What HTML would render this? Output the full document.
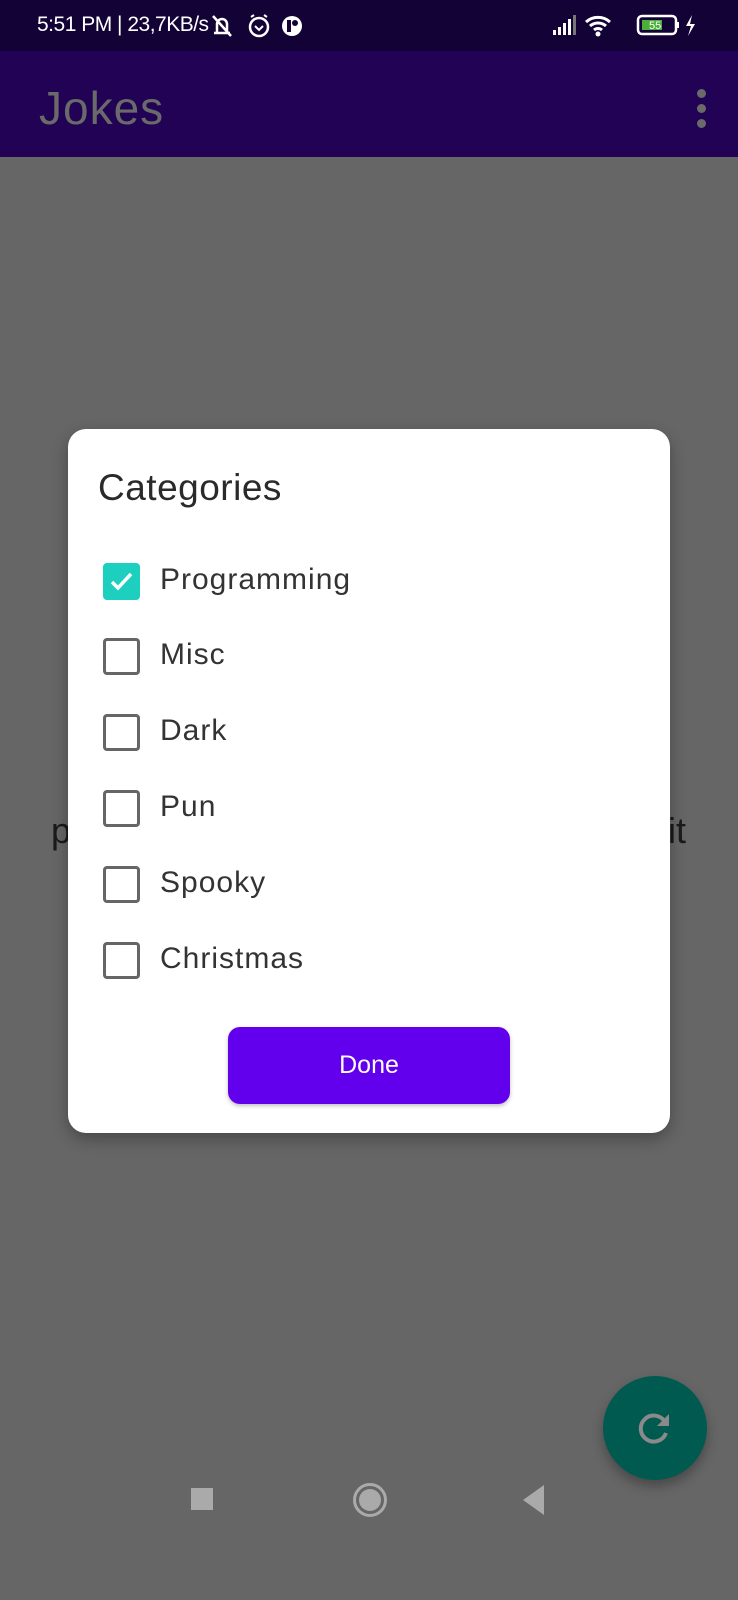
<!DOCTYPE html>
<html><head><meta charset="utf-8"><style>
*{margin:0;padding:0;box-sizing:border-box}
body{width:738px;height:1600px;background:#666;position:relative;overflow:hidden;font-family:"Liberation Sans",sans-serif}
.sb{position:absolute;left:0;top:0;width:738px;height:51px;background:#120236;color:#fff;font-size:21px}
.ab{position:absolute;left:0;top:51px;width:738px;height:106px;background:#220255}
.ab .t{position:absolute;left:39px;top:30px;font-size:46px;color:#6a6a6a;letter-spacing:1px}
.dots{position:absolute;left:697px;top:38px}
.dots i{display:block;width:9px;height:9px;border-radius:50%;background:#6a6a6a;margin-bottom:6px}
.bgt{position:absolute;top:810px;font-size:36px;color:#1a1a1a}
.dlg{position:absolute;left:68px;top:429px;width:602px;height:704px;background:#fff;border-radius:18px;box-shadow:0 6px 16px rgba(0,0,0,.3)}
.ttl{position:absolute;left:30px;top:38px;font-size:37px;color:#2a2a2a;letter-spacing:.5px}
.item{position:absolute;left:35px;height:37px}
.cb{position:absolute;left:0;top:0;width:37px;height:37px;border:3px solid #666;border-radius:4px}
.cb.on{background:#1ccfbf;border-color:#1ccfbf}
.lbl{position:absolute;left:57px;top:0px;font-size:30px;color:#333;white-space:nowrap;letter-spacing:1px}
.btn{position:absolute;left:160px;top:598px;width:282px;height:77px;background:#6200ee;border-radius:12px;color:#fff;font-size:25px;text-align:center;line-height:77px;box-shadow:0 2px 4px rgba(0,0,0,.25)}
.fab{position:absolute;left:603px;top:1376px;width:104px;height:104px;border-radius:50%;background:#005a4f;box-shadow:0 6px 12px rgba(0,0,0,.3)}
</style></head><body>
<div class="sb">
<span style="position:absolute;left:37px;top:13px;letter-spacing:-.5px">5:51 PM | 23,7KB/s</span>
<svg style="position:absolute;left:210px;top:13px" width="95" height="26" viewBox="0 0 95 26">
<path d="M4 20h16M7 20V11a5 5 0 0 1 10 0v9M3 3l18 20" stroke="#fff" stroke-width="2.5" fill="none"/>
<circle cx="49" cy="14" r="9" stroke="#fff" stroke-width="2.5" fill="none"/><path d="M45 13l4 4 4-4M41 4l3-2M57 4l-3-2" stroke="#fff" stroke-width="2" fill="none"/>
<circle cx="82" cy="13" r="10" fill="#fff"/><circle cx="85" cy="10" r="3" fill="#120236"/><rect x="77" y="7" width="4" height="12" fill="#120236"/>
</svg>
<svg style="position:absolute;left:552px;top:12px" width="150" height="28" viewBox="0 0 150 28">
<rect x="1" y="18" width="3" height="5" fill="#fff"/><rect x="6" y="15" width="3" height="8" fill="#fff"/><rect x="11" y="11" width="3" height="12" fill="#fff"/><rect x="16" y="7" width="3" height="16" fill="#fff"/><rect x="21" y="3" width="3" height="20" fill="#777"/>
<path d="M34 10a18 18 0 0 1 24 0M38 14a12 12 0 0 1 16 0M42 18a6 6 0 0 1 8 0" stroke="#fff" stroke-width="3" fill="none"/><circle cx="46" cy="22" r="2.5" fill="#fff"/>
<rect x="86" y="4" width="38" height="18" rx="4" stroke="#fff" stroke-width="2.5" fill="none"/><rect x="90" y="8" width="20" height="10" fill="#4caf3a"/><text x="97" y="17" font-size="11" fill="#fff">55</text><rect x="125" y="10" width="2" height="6" fill="#fff"/>
<path d="M140 3l-6 11h5l-3 10 7-12h-5z" fill="#fff"/>
</svg>
</div>
<div class="ab"><div class="t">Jokes</div><div class="dots"><i></i><i></i><i></i></div></div>
<div class="bgt" style="left:51px">p</div>
<div class="bgt" style="left:668px">it</div>
<div class="dlg">
<div class="ttl">Categories</div>
<div class="item" style="top:134px"><div class="cb on"><svg width="31" height="31" viewBox="0 0 31 31" style="position:absolute;left:0;top:0"><path d="M6 16l6 6 13-14" stroke="#fff" stroke-width="3.5" fill="none"/></svg></div><div class="lbl">Programming</div></div>
<div class="item" style="top:209px"><div class="cb"></div><div class="lbl">Misc</div></div>
<div class="item" style="top:285px"><div class="cb"></div><div class="lbl">Dark</div></div>
<div class="item" style="top:361px"><div class="cb"></div><div class="lbl">Pun</div></div>
<div class="item" style="top:437px"><div class="cb"></div><div class="lbl">Spooky</div></div>
<div class="item" style="top:513px"><div class="cb"></div><div class="lbl">Christmas</div></div>
<div class="btn">Done</div>
</div>
<div class="fab"><svg width="104" height="104" viewBox="0 0 104 104"><path d="M62 46a13 13 0 1 0 1 11" stroke="#8a8a8a" stroke-width="4" fill="none"/><path d="M66 38v12H54z" fill="#8a8a8a"/></svg></div>
<div style="position:absolute;left:191px;top:1488px;width:22px;height:22px;background:#aaa"></div>
<div style="position:absolute;left:353px;top:1483px;width:34px;height:34px;border:3px solid #aaa;border-radius:50%"><div style="position:absolute;left:3px;top:3px;width:22px;height:22px;border-radius:50%;background:#aaa"></div></div>
<svg style="position:absolute;left:522px;top:1485px" width="24" height="30"><path d="M22 0v30L1 15z" fill="#aaa"/></svg>
</body></html>
